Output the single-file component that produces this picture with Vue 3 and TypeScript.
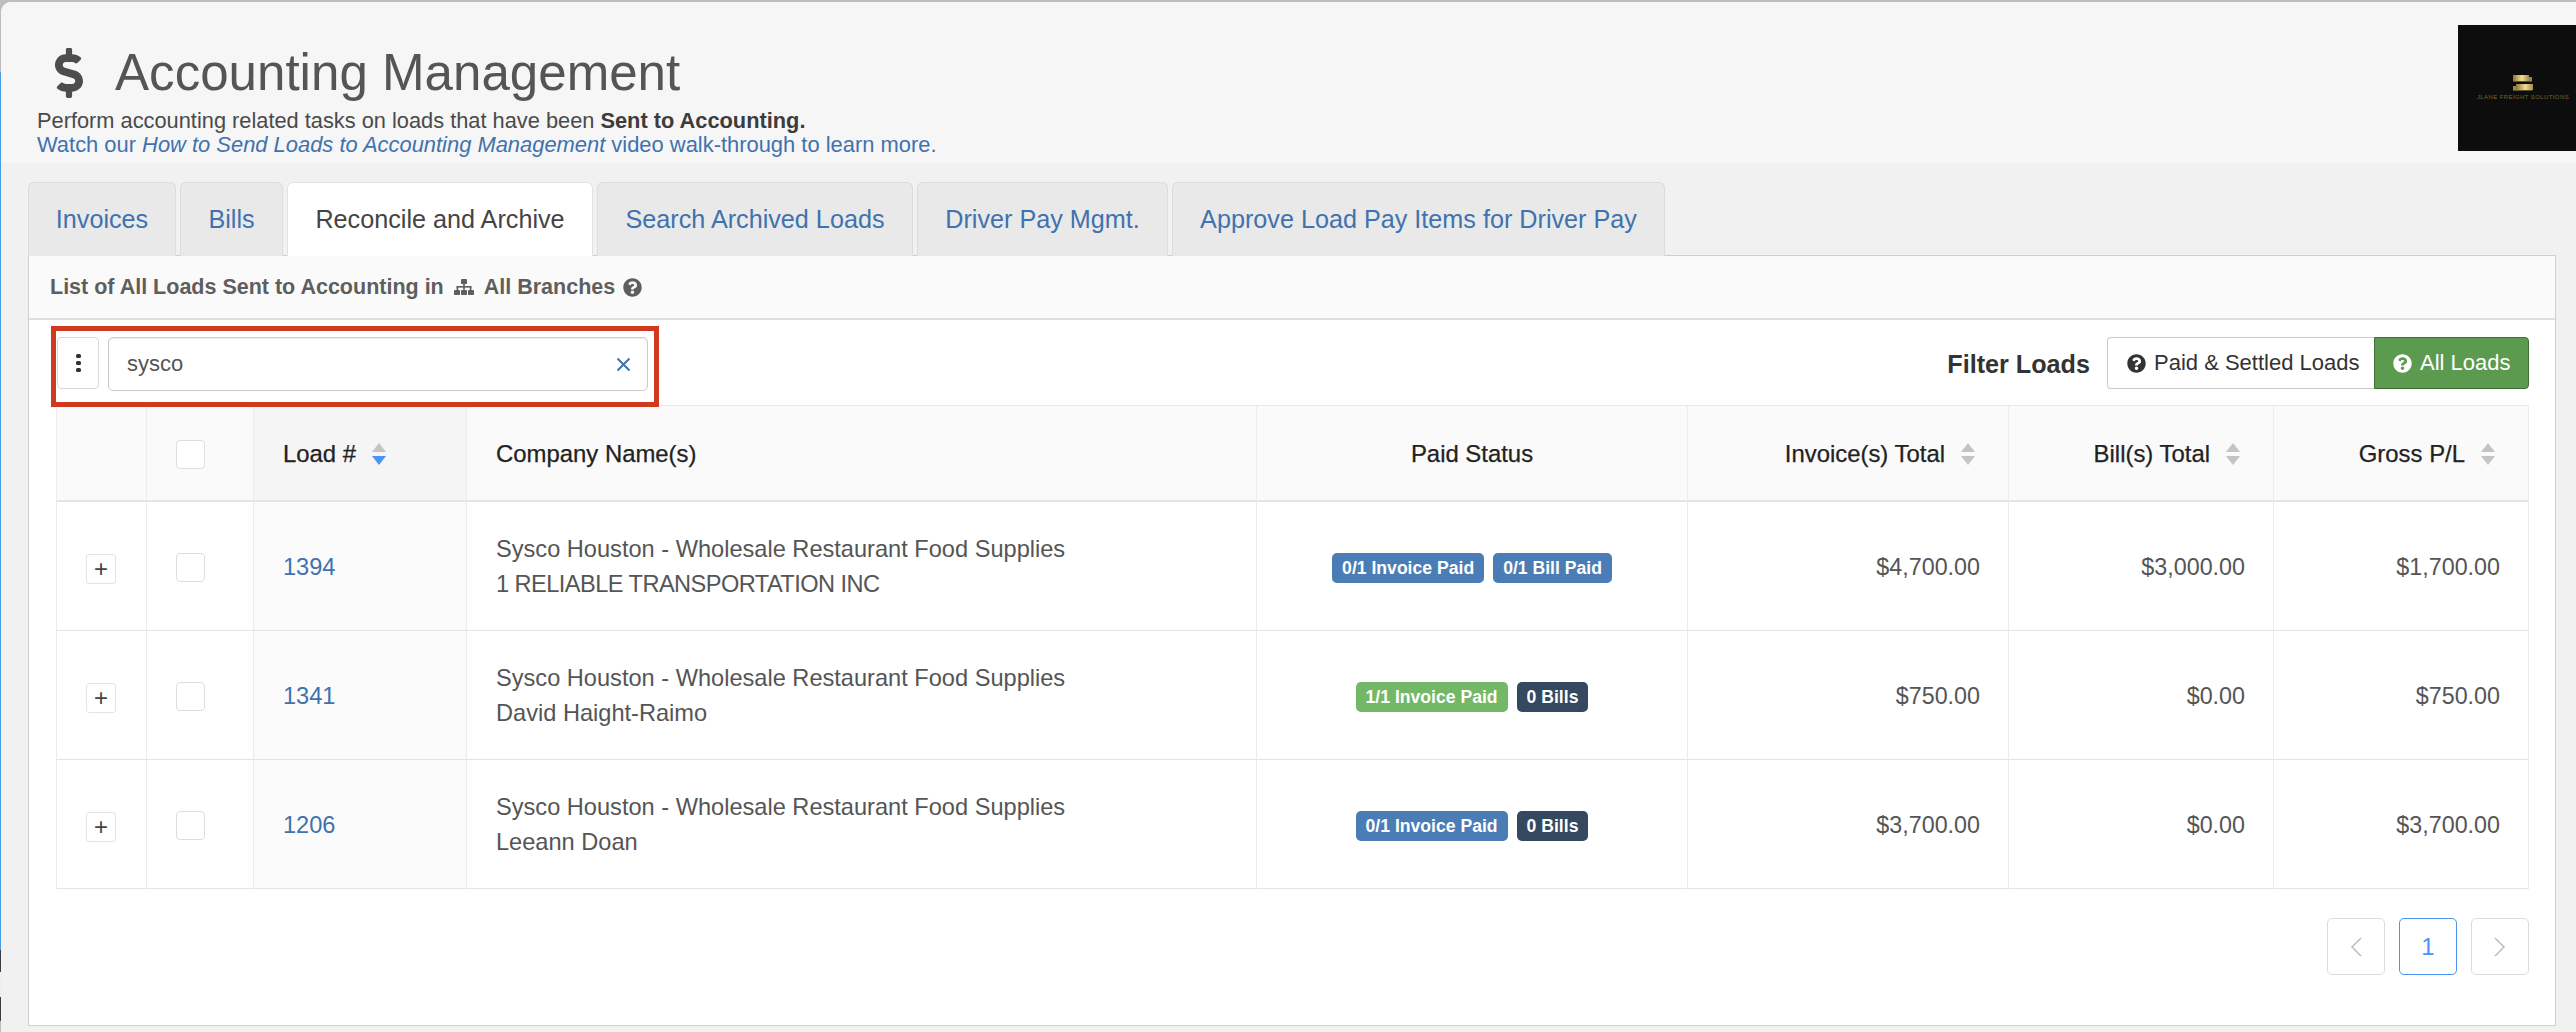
<script setup lang="ts">
interface Badge { text: string; tone: string }
interface Row { id: string; company: string; contact: string; caps?: boolean; badges: Badge[]; invoice: string; bill: string; gross: string }

const tabs: string[] = ['Invoices', 'Bills', 'Reconcile and Archive', 'Search Archived Loads', 'Driver Pay Mgmt.', 'Approve Load Pay Items for Driver Pay']
const activeTab = 'Reconcile and Archive'
const company = 'Sysco Houston - Wholesale Restaurant Food Supplies'
const rows: Row[] = [
  { id: '1394', company, contact: '1 RELIABLE TRANSPORTATION INC', caps: true, badges: [{ text: '0/1 Invoice Paid', tone: 'blue' }, { text: '0/1 Bill Paid', tone: 'blue' }], invoice: '$4,700.00', bill: '$3,000.00', gross: '$1,700.00' },
  { id: '1341', company, contact: 'David Haight-Raimo', badges: [{ text: '1/1 Invoice Paid', tone: 'green' }, { text: '0 Bills', tone: 'navy' }], invoice: '$750.00', bill: '$0.00', gross: '$750.00' },
  { id: '1206', company, contact: 'Leeann Doan', badges: [{ text: '0/1 Invoice Paid', tone: 'blue' }, { text: '0 Bills', tone: 'navy' }], invoice: '$3,700.00', bill: '$0.00', gross: '$3,700.00' },
]
const help = 'M504 256c0 136.997-111.043 248-248 248S8 392.997 8 256C8 119.083 119.043 8 256 8s248 111.083 248 248zM262.655 90c-54.497 0-89.255 22.957-116.549 63.758-3.536 5.286-2.353 12.415 2.715 16.258l34.699 26.31c5.205 3.947 12.621 3.008 16.665-2.122 17.864-22.658 30.113-35.797 57.303-35.797 20.429 0 45.698 13.148 45.698 32.958 0 14.976-12.363 22.667-32.534 33.976C247.128 238.528 216 254.941 216 296v4c0 6.627 5.373 12 12 12h56c6.627 0 12-5.373 12-12v-1.333c0-28.462 83.186-29.647 83.186-106.667 0-58.002-60.165-102-116.531-102zM256 338c-25.365 0-46 20.635-46 46 0 25.364 20.635 46 46 46s46-20.636 46-46c0-25.365-20.635-46-46-46z'
const dollar = 'M209.2 233.4l-108-31.6C88.7 198.2 80 186.5 80 173.5c0-16.3 13.2-29.5 29.5-29.5h66.3c12.2 0 24.2 3.7 34.2 10.5 6.1 4.1 14.3 3.1 19.5-2l34.8-34c7.1-6.9 6.1-18.4-1.8-24.5C238 74.8 207.4 64.1 176 64V16c0-8.8-7.2-16-16-16h-32c-8.8 0-16 7.2-16 16v48h-2.5C45.8 64-5.4 118.7.5 183.6c4.2 46.1 39.4 83.6 83.8 96.6l102.5 30c12.5 3.7 21.2 15.3 21.2 28.3 0 16.3-13.2 29.5-29.5 29.5h-66.3C100 368 88 364.3 78 357.5c-6.1-4.1-14.3-3.1-19.5 2l-34.8 34c-7.1 6.9-6.1 18.4 1.8 24.5 24.5 19.2 55.1 29.9 86.5 30v48c0 8.8 7.2 16 16 16h32c8.8 0 16-7.2 16-16v-48.2c46.6-.9 90.3-28.6 105.7-72.7 21.5-61.6-14.6-124.8-72.5-141.7z'
</script>

<template>
  <div class="shell">
    <header class="head">
      <div class="head-text">
        <h1 class="title">
          <svg class="dollar" width="28" height="50" viewBox="0 0 288 512" fill="currentColor"><path :d="dollar" /></svg>
          Accounting Management
        </h1>
        <p class="line">Perform accounting related tasks on loads that have been <b>Sent to Accounting.</b></p>
        <a class="line link">Watch our <i>How to Send Loads to Accounting Management</i> video walk-through to learn more.</a>
      </div>
      <div class="logo">
        <svg class="trucks" width="22" height="17" viewBox="0 0 22 17">
          <defs>
            <linearGradient id="gold" x1="0" x2="1" y1="0" y2="0">
              <stop offset="0" stop-color="#8d7436" />
              <stop offset="0.55" stop-color="#f2dc92" />
              <stop offset="1" stop-color="#a48b48" />
            </linearGradient>
          </defs>
          <rect x="1" y="0" width="16" height="6" fill="url(#gold)" />
          <rect x="17" y="2" width="3" height="4" fill="#8a8a66" />
          <rect x="1" y="6" width="19" height="1" fill="#5c5230" />
          <rect x="4" y="9" width="17" height="6" fill="url(#gold)" />
          <rect x="1" y="11" width="3" height="4" fill="#8a8a66" />
          <rect x="1" y="15" width="19" height="1" fill="#5c5230" />
        </svg>
        <span class="logo-text">JLANE FREIGHT SOLUTIONS</span>
      </div>
    </header>

    <div class="body">
      <nav class="tabs">
        <a v-for="t in tabs" :key="t" class="tab" :class="{ active: t === activeTab }">{{ t }}</a>
      </nav>

      <section class="panel">
        <div class="panel-head">
          List of All Loads Sent to Accounting in
          <svg class="sitemap" width="20" height="16" viewBox="0 0 20 16" fill="currentColor">
            <rect x="7" y="0" width="6" height="5" rx="0.8" />
            <rect x="9.2" y="5" width="1.6" height="3" />
            <rect x="2.6" y="7" width="14.8" height="1.6" />
            <rect x="2.6" y="7" width="1.6" height="4" />
            <rect x="15.8" y="7" width="1.6" height="4" />
            <rect x="9.2" y="7" width="1.6" height="4" />
            <rect x="0" y="11" width="6" height="5" rx="0.8" />
            <rect x="7" y="11" width="6" height="5" rx="0.8" />
            <rect x="14" y="11" width="6" height="5" rx="0.8" />
          </svg>
          All Branches
          <svg class="help" width="19" height="19" viewBox="0 0 512 512" fill="currentColor"><path :d="help" /></svg>
        </div>

        <div class="toolbar">
          <div class="search-group">
            <button class="kebab" type="button" aria-label="Options"><span></span><span></span><span></span></button>
            <div class="search">
              <span class="query">sysco</span>
              <svg class="clear" width="15" height="15" viewBox="0 0 15 15" fill="none" stroke="currentColor" stroke-width="2"><path d="M1.5 1.5l12 12M13.5 1.5l-12 12" /></svg>
            </div>
            <div class="callout"></div>
          </div>
          <div class="filter">
            <span class="filter-label">Filter Loads</span>
            <div class="btn-group">
              <button class="fbtn" type="button">
                <svg class="ficon" width="19" height="19" viewBox="0 0 512 512" fill="currentColor"><path :d="help" /></svg>Paid &amp; Settled Loads
              </button>
              <button class="fbtn on" type="button">
                <svg class="ficon" width="19" height="19" viewBox="0 0 512 512" fill="currentColor"><path :d="help" /></svg>All Loads
              </button>
            </div>
          </div>
        </div>

        <table class="grid">
          <colgroup>
            <col style="width: 91px" /><col style="width: 107px" /><col style="width: 213px" /><col style="width: 790px" />
            <col style="width: 431px" /><col style="width: 321px" /><col style="width: 265px" /><col style="width: 255px" />
          </colgroup>
          <thead>
            <tr>
              <th></th>
              <th><span class="box"></span></th>
              <th class="sorted"><span class="th-in">Load #<span class="sort"><i class="up"></i><i class="down active-sort"></i></span></span></th>
              <th>Company Name(s)</th>
              <th class="c">Paid Status</th>
              <th class="r"><span class="th-in">Invoice(s) Total<span class="sort"><i class="up"></i><i class="down"></i></span></span></th>
              <th class="r"><span class="th-in">Bill(s) Total<span class="sort"><i class="up"></i><i class="down"></i></span></span></th>
              <th class="r"><span class="th-in">Gross P/L<span class="sort"><i class="up"></i><i class="down"></i></span></span></th>
            </tr>
          </thead>
          <tbody>
            <tr v-for="row in rows" :key="row.id">
              <td class="c"><span class="expand">+</span></td>
              <td><span class="box"></span></td>
              <td class="sorted-cell"><a class="id">{{ row.id }}</a></td>
              <td class="names"><div>{{ row.company }}</div><div :class="{ caps: row.caps }">{{ row.contact }}</div></td>
              <td class="c">
                <span class="badges"><span v-for="b in row.badges" :key="b.text" class="badge" :class="b.tone">{{ b.text }}</span></span>
              </td>
              <td class="r money">{{ row.invoice }}</td>
              <td class="r money">{{ row.bill }}</td>
              <td class="r money">{{ row.gross }}</td>
            </tr>
          </tbody>
        </table>

        <div class="pager">
          <button class="page" type="button" aria-label="Previous"><svg width="14" height="22" viewBox="0 0 14 22" fill="none" stroke="currentColor" stroke-width="1.5"><path d="M12 2L3 11l9 9" /></svg></button>
          <button class="page current" type="button">1</button>
          <button class="page" type="button" aria-label="Next"><svg width="14" height="22" viewBox="0 0 14 22" fill="none" stroke="currentColor" stroke-width="1.5"><path d="M2 2l9 9-9 9" /></svg></button>
        </div>
      </section>
    </div>
  </div>
</template>

<style>
html, body { margin: 0; height: 100%; overflow: hidden; }
html {
  background: linear-gradient(to bottom,
    #bdbdbd 72px, #4a9be0 72px, #4a9be0 950px,
    #3b3b46 950px, #3b3b46 972px, #eeeeee 972px, #eeeeee 997px,
    #3b3b46 997px, #3b3b46 1021px, #bdbdbd 1021px) 0 0 / 1px 100% no-repeat, #bdbdbd;
}
body { background: transparent; }
</style>

<style scoped>
.shell {
  height: 1030px;
  margin: 2px 0 0 1px;
  border-top-left-radius: 10px;
  overflow: hidden;
  background: #f1f1f1;
  font-family: "Liberation Sans", Arial, sans-serif;
  font-size: 21px;
  color: #555;
}
.head {
  height: 161px;
  background: #f6f6f6;
  display: flex;
  justify-content: space-between;
  align-items: flex-start;
  padding: 23px 0 0 36px;
  box-sizing: border-box;
}
.head-text { padding-top: 18px; }
.title {
  margin: 0 0 6px;
  font-size: 51.1px;
  font-weight: 400;
  line-height: 60px;
  color: #555;
  display: flex;
  align-items: center;
}
.dollar { margin: 0 32px 0 18px; color: #4d4d4d; }
.line { display: block; margin: 0; line-height: 24px; color: #4a4a4a; font-size: 21.8px; }
.line b { color: #3c3c3c; }
.link { color: #3f72ae; font-size: 21.92px; }
.logo {
  width: 118px;
  height: 126px;
  background: #0d0d0d;
  display: flex;
  flex-direction: column;
  align-items: center;
  box-sizing: border-box;
  padding: 50px 0 0 0;
}
.trucks { display: block; margin-left: 12px; }
.logo-text { font-size: 6px; letter-spacing: 0.4px; color: #786624; white-space: nowrap; margin-top: 2px; margin-left: 12px; }
.body { padding: 19px 20px 0 27px; }
.tabs {
  display: grid;
  grid-template-columns: 148px 103px 306px 316px 251px 493px;
  justify-content: start;
  gap: 4px;
  height: 73px;
  position: relative;
  z-index: 1;
}
.tab {
  display: flex;
  align-items: center;
  justify-content: center;
  background: #e9e9e9;
  border: 1px solid #dcdcdc;
  border-bottom: 0;
  border-radius: 6px 6px 0 0;
  color: #3f72ae;
  font-size: 25.2px;
  box-sizing: border-box;
  height: 74px;
  white-space: nowrap;
}
.tab.active { background: #fff; color: #444; border-color: #e2e2e2; }
.panel {
  background: #fff;
  border: 1px solid #cfcfcf;
  height: 771px;
  box-sizing: border-box;
}
.panel-head {
  height: 64px;
  background: #fafafa;
  border-bottom: 2px solid #dedede;
  padding-left: 21px;
  display: flex;
  align-items: center;
  font-weight: 700;
  font-size: 21.5px;
  color: #5e5e5e;
  box-sizing: border-box;
}
.sitemap { margin: 0 10px; }
.help { margin-left: 8px; }
.toolbar { display: flex; justify-content: space-between; align-items: flex-start; height: 85px; padding: 17px 26px 0 28px; box-sizing: border-box; }
.search-group { position: relative; display: flex; gap: 9px; }
.kebab {
  width: 42px; height: 52px; background: #fff; border: 1px solid #d9d9d9; border-radius: 4px;
  display: flex; flex-direction: column; align-items: center; justify-content: center; gap: 3px; padding: 0;
  margin-bottom: 2px;
}
.kebab span { width: 5px; height: 4px; background: #333; border-radius: 1.5px; }
.search {
  width: 540px; height: 54px; border: 1px solid #ccc; border-radius: 5px; background: #fff;
  box-shadow: inset 0 1px 1px rgba(0, 0, 0, 0.08);
  display: flex; align-items: center; justify-content: space-between;
  padding: 0 16px 0 18px; box-sizing: border-box;
}
.query { color: #555; font-size: 22px; }
.clear { color: #3f72ae; }
.callout { position: absolute; left: -6px; top: -11px; width: 608px; height: 81px; border: 5px solid #d0391f; box-sizing: border-box; pointer-events: none; }
.filter { display: flex; align-items: center; height: 52px; gap: 17px; }
.filter-label { font-weight: 700; font-size: 25.2px; color: #333; margin-top: 2px; }
.btn-group { display: flex; height: 52px; }
.fbtn {
  font: inherit; font-size: 22px; color: #333; background: #fff; border: 1px solid #ccc; border-right: 0;
  border-radius: 4px 0 0 4px; padding: 0 0 0 19px; display: flex; align-items: center; gap: 8px; height: 52px; width: 267px; box-sizing: border-box; white-space: nowrap;
}
.ficon { flex: none; }
.fbtn.on { background: #5c9a50; color: #fff; border: 1px solid #3f6f37; border-radius: 0 4px 4px 0; width: 155px; padding: 0 0 0 18px; }
.grid {
  width: 2473px;
  margin-left: 27px;
  table-layout: fixed;
  border-collapse: separate;
  border-spacing: 0;
}
.grid th, .grid td { border-right: 1px solid #ececec; border-bottom: 1px solid #e4e4e4; padding: 0 29px; box-sizing: border-box; }
.grid th:first-child, .grid td:first-child { border-left: 1px solid #ececec; }
.grid th { height: 97px; background: #fafafa; font-size: 23.9px; font-weight: 400; color: #222; text-align: left; border-top: 1px solid #e8e8e8; -webkit-text-stroke: 0.25px #222; border-bottom-width: 2px; padding-top: 2px; }
.grid td { height: 129px; font-size: 23.6px; color: #555; padding-top: 2px; }
.grid th.sorted { background: #f5f5f5; }
.grid td.sorted-cell { background: #fbfbfb; }
.grid .c { text-align: center; }
.grid .r { text-align: right; }
.grid td.money { font-size: 23.3px; padding-right: 28px; }
.grid th.r .th-in { margin-right: 4px; }
.th-in { display: inline-flex; align-items: center; gap: 15px; }
.sort { display: inline-flex; flex-direction: column; gap: 4px; width: 15px; align-items: center; }
.sort i { display: block; width: 0; height: 0; border-left: 7.5px solid transparent; border-right: 7.5px solid transparent; }
.sort .up { border-bottom: 9px solid #c4c4c4; }
.sort .down { border-top: 9px solid #c4c4c4; }
.sort .down.active-sort { border-top-color: #4a94f5; }
.box { display: inline-block; width: 29px; height: 29px; border: 1px solid #ddd; border-radius: 4px; background: #fff; vertical-align: middle; box-sizing: border-box; }
.expand { display: inline-flex; align-items: center; justify-content: center; width: 30px; height: 30px; border: 1px solid #e4e4e4; border-radius: 3px; background: #fff; color: #444; font-size: 24px; box-sizing: border-box; margin: 3px 2px 0 0; }
.id { color: #3f72ae; }
.names div { line-height: 35px; }
.names .caps { letter-spacing: -0.55px; }
.badges { display: inline-flex; gap: 9px; margin-top: 2px; }
.badge { display: inline-block; color: #fff; font-size: 17.6px; font-weight: 700; line-height: 30px; height: 30px; padding: 0 10px; border-radius: 5px; white-space: nowrap; }
.badge.blue { background: #4a7db6; }
.badge.green { background: #73b866; }
.badge.navy { background: #34495f; }
.pager { display: flex; justify-content: flex-end; gap: 14px; padding: 29px 26px 0 0; }
.page { width: 58px; height: 57px; border: 1px solid #dcdcdc; border-radius: 5px; background: #fff; color: #bdbdbd; display: flex; align-items: center; justify-content: center; padding: 0; font: inherit; font-size: 24px; }
.page.current { color: #4a94f5; border-color: #4a94f5; }
</style>
